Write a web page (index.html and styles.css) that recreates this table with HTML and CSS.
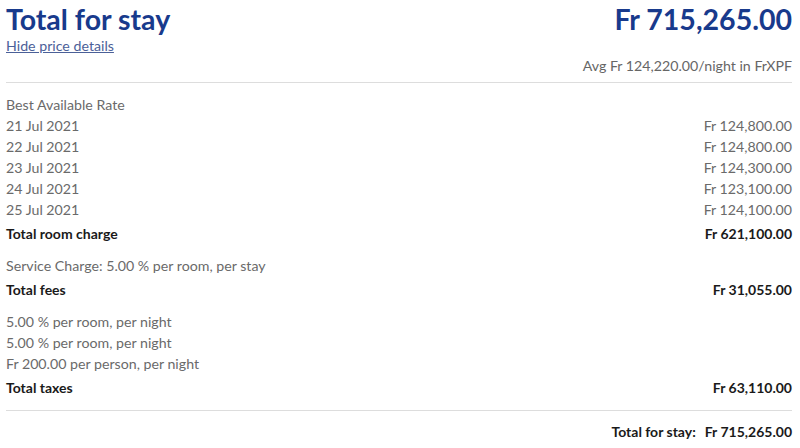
FILE: index.html
```html
<!DOCTYPE html>
<html>
<head>
<meta charset="utf-8">
<link rel="stylesheet" href="styles.css">
</head>
<body>
<div class="summary">
  <div class="head">
    <div class="head-left">
      <h1 class="title">Total for stay</h1>
      <a class="toggle" href="#">Hide price details</a>
    </div>
    <div class="grand">Fr 715,265.00</div>
  </div>
  <div class="avg">Avg Fr 124,220.00/night in FrXPF</div>
  <div class="details">
    <div class="section">
      <div class="row"><span>Best Available Rate</span></div>
      <div class="row"><span>21 Jul 2021</span><span>Fr 124,800.00</span></div>
      <div class="row"><span>22 Jul 2021</span><span>Fr 124,800.00</span></div>
      <div class="row"><span>23 Jul 2021</span><span>Fr 124,300.00</span></div>
      <div class="row"><span>24 Jul 2021</span><span>Fr 123,100.00</span></div>
      <div class="row"><span>25 Jul 2021</span><span>Fr 124,100.00</span></div>
      <div class="row total"><span>Total room charge</span><span>Fr 621,100.00</span></div>
    </div>
    <div class="section">
      <div class="row"><span>Service Charge: 5.00 % per room, per stay</span></div>
      <div class="row total"><span>Total fees</span><span>Fr 31,055.00</span></div>
    </div>
    <div class="section">
      <div class="row"><span>5.00 % per room, per night</span></div>
      <div class="row"><span>5.00 % per room, per night</span></div>
      <div class="row"><span>Fr 200.00 per person, per night</span></div>
      <div class="row total"><span>Total taxes</span><span>Fr 63,110.00</span></div>
    </div>
  </div>
  <div class="foot">
    <span class="foot-label">Total for stay:</span>
    <span class="foot-value">Fr 715,265.00</span>
  </div>
</div>
</body>
</html>
```

FILE: styles.css
```css
html, body {
  margin: 0;
  padding: 0;
  background: #ffffff;
}
body {
  font-family: "Lato", "Open Sans", sans-serif;
  color: #1a1a1a;
}
.summary {
  padding: 3px 8px 0 6px;
}
.head {
  display: flex;
  justify-content: space-between;
  align-items: flex-start;
}
.head-left {
  display: flex;
  flex-direction: column;
}
.title {
  margin: 0;
  font-size: 28.5px;
  line-height: 33px;
  font-weight: 700;
  color: #183a8c;
}
.grand {
  font-size: 28.5px;
  line-height: 33px;
  font-weight: 700;
  color: #183a8c;
}
.toggle {
  font-size: 14.2px;
  line-height: 20px;
  color: #4b6098;
  text-decoration: underline;
}
.avg {
  text-align: right;
  font-size: 14.2px;
  line-height: 20px;
  color: #666666;
  padding-bottom: 6px;
  border-bottom: 1px solid #dddddd;
}
.details {
  padding-top: 11px;
  padding-bottom: 12px;
  border-bottom: 1px solid #dddddd;
  display: flex;
  flex-direction: column;
  gap: 11px;
}
.row {
  display: flex;
  justify-content: space-between;
  font-size: 14.2px;
  line-height: 21px;
  color: #6a6a6a;
}
.row.total {
  margin-top: 3px;
  font-weight: 700;
  font-size: 14px;
  color: #1a1a1a;
}
.foot {
  display: flex;
  justify-content: flex-end;
  gap: 9px;
  padding-top: 10px;
  font-size: 14px;
  line-height: 21px;
  font-weight: 700;
  color: #1a1a1a;
}
```
